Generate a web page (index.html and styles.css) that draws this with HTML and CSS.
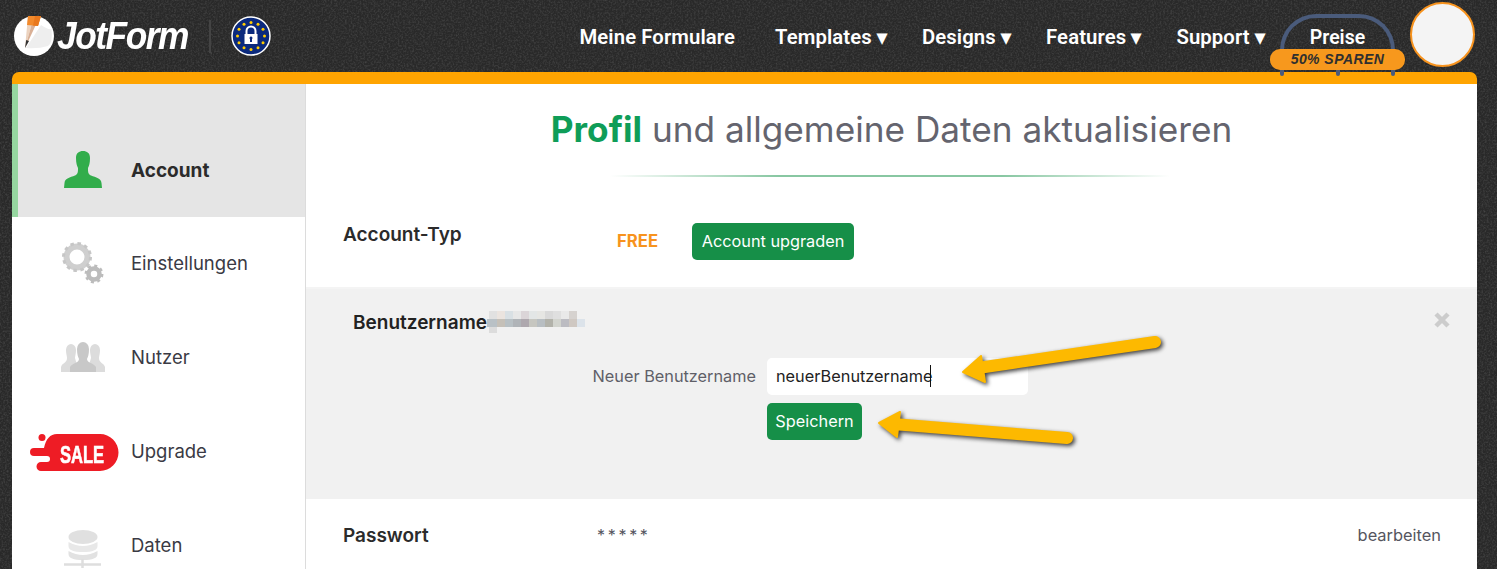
FILE: index.html
```html
<!DOCTYPE html>
<html lang="de">
<head>
<meta charset="utf-8">
<title>JotForm Account</title>
<link rel="stylesheet" href="styles.css">
</head>
<body>
<svg class="grain" width="1497" height="569" aria-hidden="true">
  <filter id="grain-noise"><feTurbulence type="fractalNoise" baseFrequency=".55" numOctaves="2" seed="4"/><feColorMatrix type="matrix" values="0 0 0 0 1  0 0 0 0 1  0 0 0 0 1  .9 0 0 0 -.36"/></filter>
  <rect width="1497" height="569" filter="url(#grain-noise)"/>
</svg>
<header class="topbar">
  <div class="brand">
    <svg class="brand-mark" viewBox="0 0 40 40" aria-hidden="true">
      <circle cx="20" cy="20" r="20" fill="#fff"/>
      <path d="M27 9 Q34 14 37.500 13 Q39 27 34 30 Q24 33 12 32 Z" fill="#eeeeee"/>
      <path d="M14 0 L20 0 L11 32 Z" fill="#ecd3bf"/>
      <path d="M20 0 L26 0 L11 32 Z" fill="#d9b096"/>
      <path d="M14 0 L27 0 L24 10 L13 9 Z" fill="#f28a2c"/>
      <path d="M21 0 L27 0 L24 10 L19 9.500 Z" fill="#e9781d"/>
      <path d="M12.200 24 L15 25 L11 32 Z" fill="#333"/>
    </svg>
    <span class="brand-name">JotForm</span>
    <span class="brand-rule"></span>
    <svg class="eu-badge" viewBox="0 0 40 40" aria-hidden="true">
      <circle cx="20" cy="20" r="19" fill="#0b2a7d" stroke="#fff" stroke-width="1.500"/>
      <g fill="#fc0">
        <circle cx="20" cy="6.500" r="1.500"/><circle cx="27" cy="8.300" r="1.500"/><circle cx="32" cy="13.300" r="1.500"/>
        <circle cx="33.500" cy="20" r="1.500"/><circle cx="32" cy="26.700" r="1.500"/><circle cx="27" cy="31.700" r="1.500"/>
        <circle cx="20" cy="33.500" r="1.500"/><circle cx="13" cy="31.700" r="1.500"/><circle cx="8" cy="26.700" r="1.500"/>
        <circle cx="6.500" cy="20" r="1.500"/><circle cx="8" cy="13.300" r="1.500"/><circle cx="13" cy="8.300" r="1.500"/>
      </g>
      <path d="M15.500 18 V15 a4.500 4.500 0 0 1 9 0 V18" fill="none" stroke="#fff" stroke-width="2"/>
      <path d="M13.500 18 H26.500 V28 H13.500Z" fill="#fff"/>
      <path d="M20 20.500 a1.500 1.500 0 0 1 1 2.600 V26 H19 V23.100 a1.500 1.500 0 0 1 1 -2.600Z" fill="#0b2a7d"/>
    </svg>
  </div>
  <nav class="topnav">
    <a class="topnav-link">Meine Formulare</a>
    <a class="topnav-link">Templates ▾</a>
    <a class="topnav-link">Designs ▾</a>
    <a class="topnav-link">Features ▾</a>
    <a class="topnav-link">Support ▾</a>
    <a class="price-tab">
      <span class="price-label">Preise</span>
      <span class="price-badge">50% SPAREN</span>
      <i class="price-stub price-stub-l"></i>
      <i class="price-stub price-stub-m"></i>
      <i class="price-stub price-stub-r"></i>
    </a>
    <span class="avatar"></span>
  </nav>
</header>

<main class="panel">
  <aside class="sidebar">
    <a class="side-item side-item-active">
      <span class="side-icon">
        <svg width="38" height="38" viewBox="0 0 38 38" aria-hidden="true"><path d="M12 7 C12 2 15 0 19 0 C23 0 26 2 26 7 C26 12 25 15 24 17 C24 21 24 23 27 24.500 C32 26.500 37 27 37.500 32 L38 37 H0 L.5 32 C1 27 6 26.500 11 24.500 C14 23 14 21 14 17 C13 15 12 12 12 7Z" fill="#32ad4b"/></svg>
      </span>
      <span class="side-label">Account</span>
    </a>
    <a class="side-item">
      <span class="side-icon">
        <svg width="42" height="42" viewBox="0 0 42 42" aria-hidden="true">
          <circle cx="15" cy="15" r="10.500" fill="none" stroke="#cfcfcf" stroke-width="6"/>
          <circle cx="15" cy="15" r="13.500" fill="none" stroke="#c6c6c6" stroke-width="3" stroke-dasharray="3.500 3.570"/>
          <circle cx="32" cy="32" r="5.500" fill="none" stroke="#bcbcbc" stroke-width="4.500"/>
          <circle cx="32" cy="32" r="8.200" fill="none" stroke="#bcbcbc" stroke-width="2.500" stroke-dasharray="3 3.440"/>
        </svg>
      </span>
      <span class="side-label">Einstellungen</span>
    </a>
    <a class="side-item">
      <span class="side-icon">
        <svg width="44" height="30" viewBox="0 0 44 30" aria-hidden="true">
          <path d="M5 8 a5 6 0 0 1 10 0 c0 4 -1 6 -1 8 l4 14 H0 V25 c1 -4 6 -4 6 -9 c0 -2 -1 -4 -1 -8Z M29 8 a5 6 0 0 1 10 0 c0 4 -1 6 -1 8 c0 5 5 5 6 9 v5 H26 l4 -14 c0 -2 -1 -4 -1 -8Z" fill="#dcdcdc"/>
          <path d="M16 7 a6 7 0 0 1 12 0 c0 5 -1 8 -2 10 c0 4 7 4 9 8 v5 H9 v-5 c2 -4 9 -4 9 -8 c-1 -2 -2 -5 -2 -10Z" fill="#c8c8c8"/>
        </svg>
      </span>
      <span class="side-label">Nutzer</span>
    </a>
    <a class="side-item">
      <span class="side-icon side-icon-sale">
        <svg width="89" height="38" viewBox="0 0 89 38" aria-hidden="true">
          <circle cx="12" cy="3.500" r="3.500" fill="#ee1c25"/>
          <path d="M27 0 H70 a18.500 18.500 0 0 1 0 37 H11 a3.500 3.500 0 0 1 0 -9 H17 a2 2 0 0 0 0 -6 H4 a4 4 0 0 1 0 -8 H14 C16 5 20 0 27 0Z" fill="#ee1c25"/>
        </svg>
        <span class="sale-text">SALE</span>
      </span>
      <span class="side-label">Upgrade</span>
    </a>
    <a class="side-item">
      <span class="side-icon side-icon-data">
        <svg width="38" height="38" viewBox="0 0 38 38" aria-hidden="true">
          <ellipse cx="19" cy="7" rx="14.500" ry="7" fill="#e0e0e0"/>
          <path d="M4.500 12 Q19 20 33.500 12 V16 Q33.500 22 19 22 Q4.500 22 4.500 16Z" fill="#e8e8e8"/>
          <path d="M4.500 21 Q19 29 33.500 21 V24 Q33.500 30 19 30 Q4.500 30 4.500 24Z" fill="#e2e2e2"/>
          <path d="M0 34.500 H37 M18.500 29 V38" stroke="#dedede" stroke-width="2.500"/>
        </svg>
      </span>
      <span class="side-label">Daten</span>
    </a>
  </aside>

  <section class="content">
    <h1 class="page-title"><strong class="page-title-strong">Profil</strong> und allgemeine Daten aktualisieren</h1>
    <div class="title-rule"></div>

    <div class="row row-type">
      <span class="row-label">Account-Typ</span>
      <span class="plan">FREE</span>
      <button class="btn btn-upgrade">Account upgraden</button>
    </div>

    <div class="edit">
      <div class="edit-head">
        <span class="edit-title">Benutzername</span>
        <svg class="pixelated" width="98" height="22" viewBox="0 0 98 22" aria-hidden="true">
          <g>
            <rect x="2" y="0" width="8" height="8" fill="#e1e1e1"/><rect x="10" y="0" width="8" height="8" fill="#ebe4df"/><rect x="18" y="0" width="8" height="8" fill="#d9e0e4"/><rect x="26" y="0" width="8" height="8" fill="#e7e7e7"/><rect x="34" y="0" width="8" height="8" fill="#dbd5d8"/><rect x="42" y="0" width="8" height="8" fill="#e3e6e6"/><rect x="50" y="0" width="8" height="8" fill="#e6e6e3"/><rect x="58" y="0" width="8" height="8" fill="#d9d9d9"/><rect x="66" y="0" width="8" height="8" fill="#dfdfdf"/><rect x="74" y="0" width="8" height="8" fill="#e9e9e9"/><rect x="82" y="0" width="8" height="8" fill="#d6d2cf"/>
            <rect x="0" y="8" width="10" height="8" fill="#b9c1c6"/><rect x="10" y="8" width="8" height="8" fill="#c5c0b8"/><rect x="18" y="8" width="8" height="8" fill="#b8c0c4"/><rect x="26" y="8" width="8" height="8" fill="#b0b4b8"/><rect x="34" y="8" width="8" height="8" fill="#aea8ae"/><rect x="42" y="8" width="8" height="8" fill="#c6c6c0"/><rect x="50" y="8" width="8" height="8" fill="#b8bec2"/><rect x="58" y="8" width="8" height="8" fill="#b2b2aa"/><rect x="66" y="8" width="8" height="8" fill="#d2d4ce"/><rect x="74" y="8" width="8" height="8" fill="#bcbcc2"/><rect x="82" y="8" width="8" height="8" fill="#cfc8c2"/><rect x="90" y="8" width="8" height="8" fill="#dce3ea"/>
            <rect x="2" y="16" width="8" height="6" fill="#dcdcdc"/>
          </g>
        </svg>
        <svg class="edit-close" width="16" height="16" viewBox="0 0 16 16" aria-hidden="true"><path d="M2 2 L14 14 M14 2 L2 14" stroke="#cccccc" stroke-width="4.500"/></svg>
      </div>
      <form class="edit-form">
        <label class="edit-label">Neuer Benutzername</label>
        <div class="field"><span class="field-text">neuerBenutzername</span><i class="caret"></i></div>
        <button class="btn btn-save" type="button">Speichern</button>
      </form>
    </div>

    <div class="row row-pass">
      <span class="row-label">Passwort</span>
      <span class="stars">*****</span>
      <a class="row-edit">bearbeiten</a>
    </div>
  </section>
</main>

<svg class="callouts" width="1497" height="569" viewBox="0 0 1497 569" aria-hidden="true">
  <g class="callout">
    <path d="M1155 342 L978 368" fill="none" stroke="#fdb900" stroke-width="12" stroke-linecap="round"/>
    <path d="M963 372 L981 356 L985 382 Z" fill="#fdb900" stroke="#fdb900" stroke-width="2" stroke-linejoin="round"/>
  </g>
  <g class="callout">
    <path d="M1067 438 L893 424" fill="none" stroke="#fdb900" stroke-width="12" stroke-linecap="round"/>
    <path d="M879 423 L900 412 L897 437 Z" fill="#fdb900" stroke="#fdb900" stroke-width="2" stroke-linejoin="round"/>
  </g>
</svg>
</body>
</html>
```
FILE: styles.css
```css
* { box-sizing: border-box; }
html, body { height: 100%; }
body {
  margin: 0;
  height: 569px;
  overflow: hidden;
  position: relative;
  font-family: Inter, "Liberation Sans", sans-serif;
  color: #2b2b33;
  background-color: #292929;
}
a { color: inherit; text-decoration: none; }

.grain { position: absolute; left: 0; top: 0; opacity: .28; }

.topbar {
  height: 72px;
  padding: 0 22px 0 14px;
  display: flex;
  align-items: center;
  justify-content: space-between;
  position: relative;
  z-index: 2;
}
.brand { display: flex; align-items: center; }
.brand-mark { width: 40px; height: 40px; flex: none; }
.brand-name {
  margin-left: 3px;
  width: 132px;
  font: italic 700 38px/40px "Liberation Sans", sans-serif;
  letter-spacing: -1.600px;
  color: #fff;
  white-space: nowrap;
  transform: scaleX(.93);
  transform-origin: left center;
}
.brand-rule { width: 2px; height: 33px; margin-left: 20px; background: #444; }
.eu-badge { width: 40px; height: 40px; margin-left: 20px; }

.topnav { display: flex; align-items: center; font: 600 20.300px/24px Roboto, "Liberation Sans", sans-serif; letter-spacing: .1px; color: #fff; }
.topnav-link { margin-right: 35px; margin-top: 2px; }
.topnav-link:first-child { margin-right: 40px; }
.topnav-link:nth-child(5) { margin-right: 15px; }

.price-tab {
  position: relative;
  width: 115px;
  height: 58px;
  margin-top: 14px;
  padding-top: 8px;
  text-align: center;
  border: 4px solid #4a5b7b;
  border-bottom: 0;
  border-radius: 36px 36px 0 0;
}
.price-label { display: block; font-size: 19.500px; letter-spacing: 0; }
.price-badge {
  position: absolute;
  left: -14px;
  top: 31px;
  width: 135px;
  height: 21px;
  background: #f7981d;
  border-radius: 10px;
  color: #2f2f2f;
  font: italic 700 14px/21px "Liberation Sans", sans-serif;
  letter-spacing: .45px;
}
.price-stub { position: absolute; top: 52px; width: 4px; height: 6px; background: #4a5b7b; border-radius: 0 0 2px 2px; }
.price-stub-l { left: -4px; }
.price-stub-m { left: 52px; }
.price-stub-r { right: -4px; }

.avatar {
  width: 65px;
  height: 65px;
  margin-left: 15px;
  margin-top: -3px;
  border-radius: 50%;
  background: #f4f4f4;
  border: 2px solid #f7931e;
}

.panel {
  position: relative;
  width: 1465px;
  margin-left: 12px;
  height: 497px;
  display: flex;
  background: #fff;
  border-top: 12px solid #ffa401;
  border-radius: 7px 7px 0 0;
  overflow: hidden;
}

.sidebar { width: 294px; flex: none; border-right: 1px solid #dcdcdc; }
.side-item { display: flex; align-items: center; height: 94px; font-size: 18.500px; color: #3a3a44; padding-bottom: 2px; }
.side-item-active {
  height: 133px;
  padding-top: 39px;
  padding-bottom: 0;
  background: #e5e5e5;
  box-shadow: inset 6px 0 0 #96d6a0;
  color: #2b2b2b;
  font-size: 19px;
  font-weight: 700;
}
.side-icon {
  position: relative;
  width: 119px;
  padding-left: 23px;
  flex: none;
  display: flex;
  justify-content: center;
  align-items: center;
}
.side-icon-sale { padding-left: 18px; justify-content: flex-start; top: 2px; }
.side-icon-data { top: 4px; }
.sale-text {
  position: absolute;
  left: 48px;
  top: 9px;
  color: #fff;
  font: 700 24px/24px "Liberation Sans", sans-serif;
  -webkit-text-stroke: .6px #fff;
  transform: scaleX(.69);
  transform-origin: left center;
}

.content { flex: 1; min-width: 0; }
.page-title {
  margin: 0;
  padding-top: 21px;
  text-align: center;
  font-size: 35.200px;
  line-height: 48px;
  font-weight: 400;
  color: #64646e;
}
.page-title-strong { font-weight: 700; color: #0f9d58; }
.title-rule {
  width: 560px;
  height: 2px;
  margin: 22px 0 0 304px;
  background: linear-gradient(90deg, transparent, #88c7a2 30%, #88c7a2 70%, transparent);
}

.row { display: flex; padding: 0 36px 0 37px; }
.row-label { width: 254px; font-size: 19px; line-height: 22px; font-weight: 600; color: #2b2b2b; }
.row-type { height: 110px; padding-top: 46px; align-items: flex-start; }
.row-type .row-label { padding-top: 1px; }
.plan { width: 75px; margin-left: 20px; line-height: 37px; font-size: 16.700px; font-weight: 700; color: #f7931e; }

.btn {
  border: 0;
  border-radius: 5px;
  background: #168f48;
  color: #fff;
  font-family: inherit;
  font-size: 16.300px;
  height: 37px;
  padding: 0 0 2px;
}
.btn-upgrade { width: 162px; }
.btn-save { width: 95px; grid-column: 2; justify-self: start; }

.edit {
  height: 212px;
  padding: 2px 0 0;
  background: #f1f1f1;
  border-top: 2px solid #f4f4f4;
}
.edit-head { display: flex; align-items: center; height: 36px; margin-top: 13px; padding-left: 47px; }
.edit-title { font-size: 19px; font-weight: 600; color: #222; }
.pixelated { flex: none; }
.edit-close { margin-left: auto; margin-right: 27px; margin-top: -4px; flex: none; }

.edit-form {
  display: grid;
  grid-template-columns: 461px 261px;
  row-gap: 8px;
  margin-top: 18px;
}
.edit-label { align-self: center; padding: 0 11px 2px 0; text-align: right; font-size: 16.300px; color: #5f5f68; white-space: nowrap; }
.field {
  height: 37px;
  padding: 0 0 2px 9px;
  display: flex;
  align-items: center;
  background: #fff;
  border-radius: 5px;
  font-size: 16.300px;
  color: #222;
}
.caret { width: 1px; height: 22px; margin-left: -2px; background: #111; }

.row-pass { height: 72px; align-items: center; }
.row-pass .row-label { padding-top: 2px; }
.stars { font-size: 16px; letter-spacing: 2.700px; color: #55555e; }
.row-edit { margin-left: auto; font-size: 16.400px; color: #55555e; }

.callouts { position: absolute; left: 0; top: 0; z-index: 3; pointer-events: none; }
.callout { filter: drop-shadow(2px 2px 2px rgba(0,0,0,.75)); }
```
